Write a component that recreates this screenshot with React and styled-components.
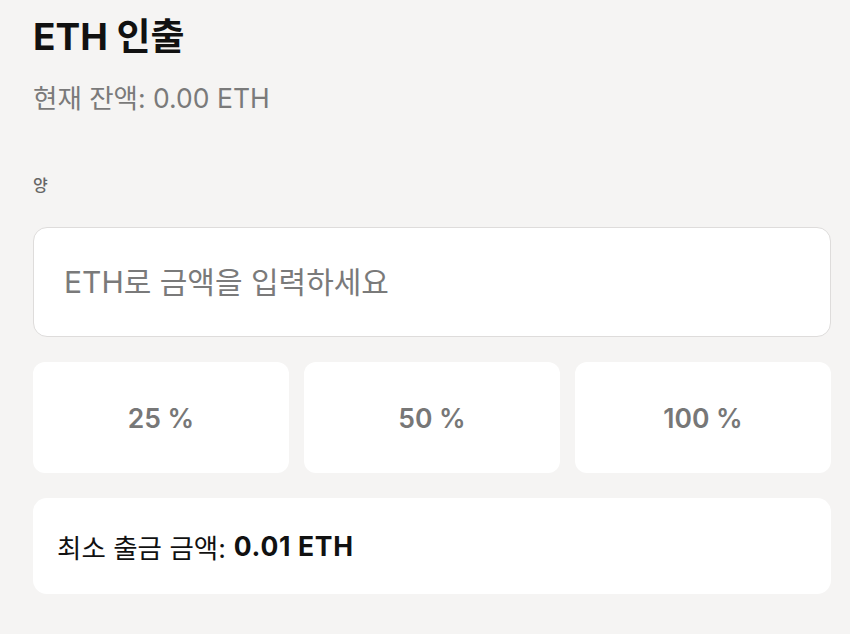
import React from "react";
import styled, { createGlobalStyle } from "styled-components";

const Global = createGlobalStyle`
  html, body {
    margin: 0;
    background: #f5f4f3;
    font-family: Inter, "Noto Sans CJK KR", sans-serif;
  }
`;

const Page = styled.div`
  padding: 13px 19px 0 33px;
  display: flex;
  flex-direction: column;
`;

const Title = styled.h1`
  margin: 0;
  font-size: 37px;
  font-weight: 700;
  color: #111;
  line-height: 48px;
`;

const Balance = styled.div`
  margin-top: 20px;
  font-size: 26.5px;
  color: #7a7a7a;
  line-height: 34px;
`;

const Label = styled.label`
  margin-top: 59px;
  font-size: 16px;
  font-weight: 500;
  color: #666;
  line-height: 22px;
`;

const Input = styled.input`
  margin-top: 31px;
  height: 110px;
  box-sizing: border-box;
  border: 1.5px solid #dedcdb;
  border-radius: 14px;
  background: #fff;
  padding: 0 30px;
  font-family: inherit;
  font-size: 30px;
  color: #333;
  outline: none;
  &::placeholder {
    color: #7a7a7a;
  }
`;

const Presets = styled.div`
  margin-top: 25px;
  display: grid;
  grid-template-columns: repeat(3, 1fr);
  gap: 15px;
`;

const Preset = styled.button`
  height: 111px;
  border: none;
  border-radius: 12px;
  background: #fff;
  font-family: inherit;
  font-size: 26.5px;
  font-weight: 600;
  color: #777;
  cursor: pointer;
`;

const Info = styled.div`
  margin-top: 25px;
  height: 96px;
  border-radius: 14px;
  background: #fff;
  display: flex;
  align-items: center;
  padding: 0 24px;
  font-size: 26.5px;
  color: #111;
  b {
    font-weight: 700;
    margin-left: 8px;
    letter-spacing: 0.7px;
  }
`;

export default function App() {
  return (
    <>
      <Global />
      <Page>
        <Title>ETH 인출</Title>
        <Balance>현재 잔액: 0.00 ETH</Balance>
        <Label>양</Label>
        <Input placeholder="ETH로 금액을 입력하세요" />
        <Presets>
          {["25 %", "50 %", "100 %"].map((p) => (
            <Preset key={p}>{p}</Preset>
          ))}
        </Presets>
        <Info>
          최소 출금 금액:<b>0.01 ETH</b>
        </Info>
      </Page>
    </>
  );
}
